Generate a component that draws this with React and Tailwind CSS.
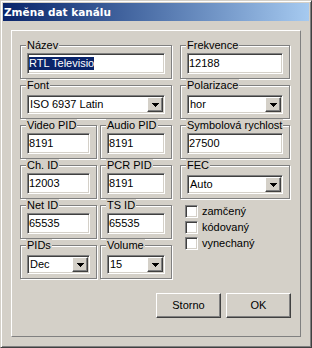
const sunken =
  "border border-t-[#808080] border-l-[#808080] border-b-white border-r-white shadow-[inset_1px_1px_0_#404040,inset_-1px_-1px_0_#d4d0c8]";
const raised =
  "border border-t-white border-l-white border-b-[#404040] border-r-[#404040] shadow-[inset_-1px_-1px_0_#808080]";

function Group({ label, combo, children }) {
  return (
    <div
      className={`relative h-[34px] border border-[#808080] shadow-[inset_1px_1px_0_#fff,1px_1px_0_#fff] px-[6px] ${
        combo ? "pt-[9px]" : "pt-[7px]"
      }`}
    >
      <span className="absolute left-[5px] top-[-7px] bg-[#d4d0c8] px-[1px] leading-[13px] whitespace-nowrap">
        {label}
      </span>
      {children}
    </div>
  );
}

function Field({ value, selected }) {
  return (
    <div className={`${sunken} h-[21px] bg-white px-[1px] flex items-center leading-[13px] whitespace-nowrap overflow-hidden`}>
      {selected ? <span className="bg-[#0a246a] text-white">{value}</span> : <span>{value}</span>}
    </div>
  );
}

function Combo({ value }) {
  return (
    <div className={`${sunken} h-[19px] bg-white p-[1px] flex items-stretch`}>
      <span className="flex-1 pl-[1px] leading-[15px] whitespace-nowrap overflow-hidden">{value}</span>
      <div className={`${raised} w-[16px] bg-[#d4d0c8] flex items-center justify-center`}>
        <svg width="7" height="4" viewBox="0 0 7 4" shapeRendering="crispEdges">
          <path d="M0 0h7v1H0zM1 1h5v1H1zM2 2h3v1H2zM3 3h1v1H3z" fill="#000" />
        </svg>
      </div>
    </div>
  );
}

function Check({ label }) {
  return (
    <div className="flex items-center gap-[4px] h-[13px]">
      <div className={`${sunken} w-[13px] h-[13px] bg-white`} />
      <span className="leading-[13px]">{label}</span>
    </div>
  );
}

function Button({ children }) {
  return (
    <button className={`${raised} w-[65px] h-[25px] bg-[#d4d0c8] flex items-center justify-center leading-[13px]`}>
      {children}
    </button>
  );
}

export default function App() {
  return (
    <div className="w-[312px] h-[348px] bg-[#d4d0c8] border border-t-[#d4d0c8] border-l-[#d4d0c8] border-b-[#404040] border-r-[#404040] shadow-[inset_1px_1px_0_#fff,inset_-1px_-1px_0_#808080] p-[2px] text-[11px] text-black font-['Liberation_Sans',Arial,sans-serif]">
      {/* title bar */}
      <div className="h-[18px] bg-linear-to-r from-[#0a246a] to-[#a6caf0] pl-[1px] leading-[18px] text-white font-bold text-[10.5px] font-['DejaVu_Sans',Verdana,sans-serif]">
        Změna dat kanálu
      </div>

      {/* panel */}
      <div className="ml-[8px] mt-[9px] w-[290px] h-[307px] border border-t-white border-l-white border-b-[#808080] border-r-[#808080] pl-[8px] pt-[14px]">
        <div className="grid grid-cols-[152px_110px] grid-rows-[repeat(6,34px)] gap-x-[8px] gap-y-[6px]">
          <Group label="Název">
            <Field value="RTL Televisio" selected />
          </Group>
          <Group label="Frekvence">
            <Field value="12188" />
          </Group>

          <Group label="Font" combo>
            <Combo value="ISO 6937 Latin" />
          </Group>
          <Group label="Polarizace" combo>
            <Combo value="hor" />
          </Group>

          <div className="grid grid-cols-[77px_72px] gap-x-[3px]">
            <Group label="Video PID">
              <Field value="8191" />
            </Group>
            <Group label="Audio PID">
              <Field value="8191" />
            </Group>
          </div>
          <Group label="Symbolová rychlost">
            <Field value="27500" />
          </Group>

          <div className="grid grid-cols-[77px_72px] gap-x-[3px]">
            <Group label="Ch. ID">
              <Field value="12003" />
            </Group>
            <Group label="PCR PID">
              <Field value="8191" />
            </Group>
          </div>
          <Group label="FEC" combo>
            <Combo value="Auto" />
          </Group>

          <div className="grid grid-cols-[77px_72px] gap-x-[3px]">
            <Group label="Net ID">
              <Field value="65535" />
            </Group>
            <Group label="TS ID">
              <Field value="65535" />
            </Group>
          </div>
          <div className="h-[34px] ml-[5px] flex flex-col gap-[3px]">
            <Check label="zamčený" />
            <Check label="kódovaný" />
            <Check label="vynechaný" />
          </div>

          <div className="grid grid-cols-[77px_72px] gap-x-[3px]">
            <Group label="PIDs" combo>
              <Combo value="Dec" />
            </Group>
            <Group label="Volume" combo>
              <Combo value="15" />
            </Group>
          </div>
          <div />
        </div>

        <div className="flex gap-[5px] ml-[136px] mt-[14px]">
          <Button>Storno</Button>
          <Button>OK</Button>
        </div>
      </div>
    </div>
  );
}
